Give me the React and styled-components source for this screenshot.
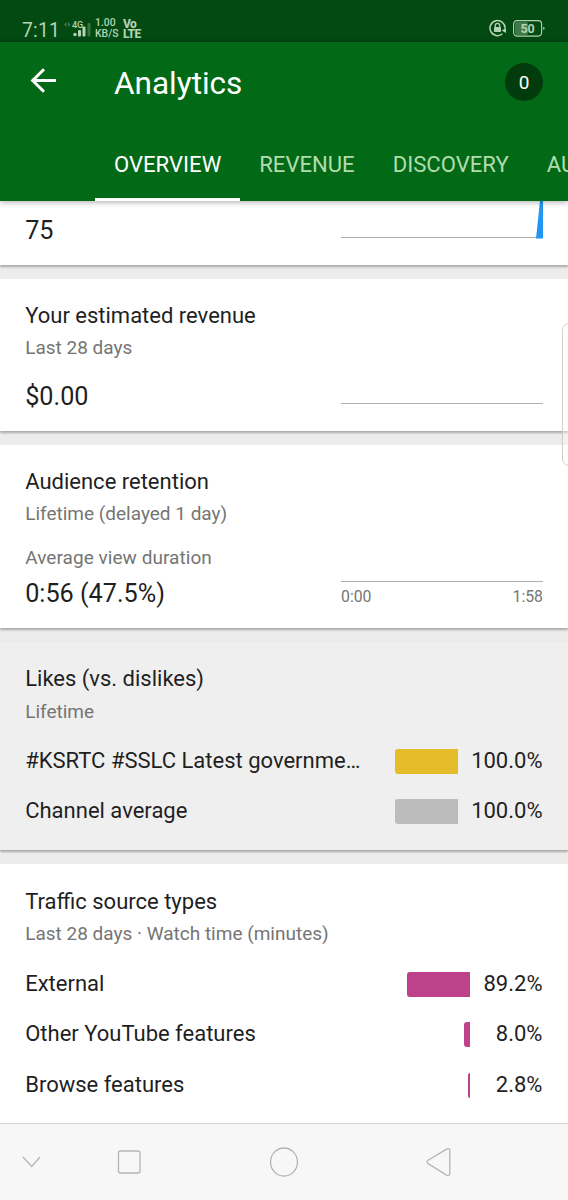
import styled, { createGlobalStyle } from "styled-components";
import React from "react";

const GlobalStyle = createGlobalStyle`
  * {
    box-sizing: border-box;
  }
  body {
    margin: 0;
    background: #ececec;
    color: #1f1f1f;
    font-family: Roboto, "Liberation Sans", sans-serif;
  }
`;

const Screen = styled.div`
  position: relative;
  display: flex;
  flex-direction: column;
  width: 568px;
  height: 1200px;
  overflow: hidden;
`;

const StatusBar = styled.div`
  display: flex;
  align-items: flex-end;
  flex: none;
  height: 42px;
  padding: 0 23px 3px 22px;
  background: #024a12;
  color: #b4d3b5;
`;
const Clock = styled.span`
  width: 41px;
  font-size: 19.3px;
  line-height: 17px;
  letter-spacing: 0.2px;
  white-space: nowrap;
`;
const StackedText = styled.div`
  display: flex;
  flex-direction: column;
  margin-left: ${(props) => props.$left}px;
  font-size: ${(props) => props.$size}px;
  font-weight: ${(props) => props.$weight};
  line-height: ${(props) => props.$line}px;
  letter-spacing: ${(props) => props.$spacing || 0}px;
  white-space: nowrap;
`;
const StatusIcons = styled.div`
  display: flex;
  align-items: center;
  gap: 7px;
  margin: 0 0 2px auto;
`;

const Header = styled.header`
  position: relative;
  z-index: 1;
  flex: none;
  height: 159px;
  background: #026a17;
  color: #fff;
  box-shadow: 0 1px 6px rgba(0, 0, 0, 0.35);
`;
const Toolbar = styled.div`
  display: flex;
  align-items: center;
  height: 79px;
  padding: 0 25px 0 30px;
`;
const Title = styled.h1`
  margin: 4px 0 0 57px;
  font-size: 31.5px;
  font-weight: 400;
  line-height: 38px;
`;
const Counter = styled.div`
  width: 38px;
  height: 38px;
  margin-left: auto;
  border-radius: 50%;
  background: #023c0d;
  font-size: 19px;
  line-height: 39px;
  text-align: center;
`;
const Tabs = styled.nav`
  display: flex;
  height: 80px;
  padding-left: 95px;
  overflow: hidden;
`;
const Tab = styled.div`
  flex: none;
  height: 80px;
  padding: 0 19px;
  border-bottom: 3px solid ${(props) => (props.$active ? "#fff" : "transparent")};
  color: ${(props) => (props.$active ? "#fff" : "#b3dcae")};
  font-size: 22.1px;
  line-height: 87px;
`;

const Card = styled.section`
  flex: none;
  height: ${(props) => props.$height}px;
  margin-bottom: ${(props) => (props.$last ? 0 : 14)}px;
  padding: ${(props) => props.$top ?? 24}px 25px 0 25.2px;
  background: ${(props) => (props.$muted ? "#efefef" : "#fff")};
  box-shadow: 0 2px 2px rgba(0, 0, 0, 0.28);
`;
const CardTitle = styled.h2`
  margin: 0;
  font-size: 22px;
  font-weight: 400;
  line-height: 26px;
`;
const Caption = styled.p`
  margin: ${(props) => props.$gap || 7}px 0 0;
  color: #757575;
  font-size: 19px;
  line-height: 24px;
`;
const MetricRow = styled.div`
  display: flex;
  justify-content: space-between;
  margin-top: ${(props) => props.$gap}px;
`;
const Value = styled.div`
  font-size: 25.2px;
  line-height: 30px;
`;
const Duration = styled.div`
  ${Caption} {
    margin: 0 0 9px;
    letter-spacing: 0.05px;
  }
`;
const ViewsChart = styled.svg`
  margin-top: -15px;
`;
const Axis = styled.div`
  width: 202px;
  height: ${(props) => props.$height}px;
  border-bottom: 1.5px solid #b0b0b0;
`;
const AxisLabels = styled.div`
  display: flex;
  justify-content: space-between;
  margin-top: 5px;
  color: #757575;
  font-size: 15.8px;
  line-height: 20px;
`;

const BarList = styled.div`
  margin-top: ${(props) => props.$gap}px;
`;
const BarRow = styled.div`
  display: flex;
  align-items: center;
  height: 50.5px;
  font-size: 22px;
  line-height: 26px;
`;
const BarLabel = styled.div`
  width: 343px;
  margin-bottom: 1px;
  overflow: hidden;
  text-overflow: ellipsis;
  white-space: nowrap;
`;
const BarTrack = styled.div`
  display: flex;
  flex: 1;
  justify-content: flex-end;
`;
const Bar = styled.div`
  height: 25px;
  border-radius: 3px 0 0 3px;
  background: ${(props) => props.$color};
`;
const Percent = styled.div`
  width: ${(props) => props.$width}px;
  margin-bottom: 1px;
  padding-right: 0.5px;
  text-align: right;
`;

const EdgePanel = styled.div`
  position: absolute;
  top: 323px;
  right: -10px;
  z-index: 2;
  width: 16px;
  height: 143px;
  border: 1px solid #cfcfcf;
  border-radius: 7px;
  background: rgba(255, 255, 255, 0.35);
`;

const NavBar = styled.footer`
  position: relative;
  z-index: 1;
  display: flex;
  align-items: center;
  flex: none;
  height: 77px;
  border-top: 1px solid #d2d2d2;
  background: #f7f7f7;
`;

const likes = [
  { label: "#KSRTC #SSLC Latest governme…", value: "100.0%", bar: 63, color: "#e5bc29" },
  { label: "Channel average", value: "100.0%", bar: 63, color: "#bcbcbc" },
];
const traffic = [
  { label: "External", value: "89.2%", bar: 63, color: "#bd4289" },
  { label: "Other YouTube features", value: "8.0%", bar: 6, color: "#bd4289" },
  { label: "Browse features", value: "2.8%", bar: 2, color: "#bd4289" },
];

function Bars({ items, percentWidth, gap }) {
  return (
    <BarList $gap={gap}>
      {items.map((item) => (
        <BarRow key={item.label}>
          <BarLabel>{item.label}</BarLabel>
          <BarTrack>
            <Bar $color={item.color} style={{ width: item.bar }} />
          </BarTrack>
          <Percent $width={percentWidth}>{item.value}</Percent>
        </BarRow>
      ))}
    </BarList>
  );
}

function SignalIcon() {
  return (
    <svg width="28" height="19" viewBox="0 0 28 19" fill="#b4d3b5">
      <path d="M3.5 2 1 4.500 3.500 7zM5 2l2.500 2.500L5 7z" opacity=".35" />
      <text x="9" y="7.700" fontSize="9" fontWeight="500">
        4G
      </text>
      <circle cx="12" cy="14.500" r="1.700" />
      <rect x="15" y="10" width="3" height="6.500" rx="1" />
      <rect x="19.500" y="6.500" width="3" height="10" rx="1" />
      <rect x="24.500" y="3" width="3" height="13.500" rx="1" opacity=".3" />
    </svg>
  );
}

function LockIcon() {
  return (
    <svg width="17" height="18" viewBox="0 0 17 18" fill="none" stroke="#b4d3b5">
      <path d="M13.400 14.800A7.500 7.500 0 1 1 16 9.500" strokeWidth="1.500" />
      <path d="M12.700 11.500 17 9v5z" fill="#b4d3b5" stroke="none" />
      <rect x="5" y="8" width="7" height="5" rx=".8" fill="#b4d3b5" stroke="none" />
      <path d="M6.300 8V6.600a2.200 2.200 0 0 1 4.400 0V8" strokeWidth="1.300" />
    </svg>
  );
}

function BatteryIcon() {
  return (
    <svg width="32" height="17" viewBox="0 0 32 17" fill="#b4d3b5">
      <rect x="2" y="2" width="13" height="13" rx="2" opacity=".35" />
      <rect x=".6" y=".6" width="28" height="15.500" rx="3.500" fill="none" stroke="#b4d3b5" strokeWidth="1.100" />
      <path d="M30.200 7q1.400 0 1.400 1.400t-1.400 1.400z" />
      <text x="14.600" y="12.800" fontSize="12.500" fontWeight="700" textAnchor="middle">
        50
      </text>
    </svg>
  );
}

function BackArrow() {
  return (
    <svg width="27" height="28" viewBox="0 0 27 28" fill="none" stroke="#fff" strokeWidth="3">
      <path d="M26 12.500H3M14 1.300 2.700 12.500 14 23.800" />
    </svg>
  );
}

function NavIcons() {
  return (
    <svg width="568" height="76" viewBox="0 1124 568 76" fill="none" stroke="#b5b5b5" strokeWidth="1.300">
      <path d="m23 1157 8.700 9.500 8.300-9.500" />
      <rect x="118.500" y="1151" width="21.500" height="22" rx="2" />
      <ellipse cx="284" cy="1162" rx="13.500" ry="14" />
      <path d="m428.100 1160.300 18.500-11.200q3.200-1.600 3.200 2v22q0 3.400-3.200 2l-18.500-11.500q-2-1.600 0-3.300z" />
    </svg>
  );
}

export default function App() {
  return (
    <Screen>
      <GlobalStyle />
      <StatusBar>
        <Clock>7:11</Clock>
        <SignalIcon />
        <StackedText $left={4} $size={10.4} $weight={500} $line={10.3}>
          <span>1.00</span>
          <span>KB/S</span>
        </StackedText>
        <StackedText $left={4.5} $size={12} $weight={800} $line={10} $spacing={-0.6}>
          <span>Vo</span>
          <span>LTE</span>
        </StackedText>
        <StatusIcons>
          <LockIcon />
          <BatteryIcon />
        </StatusIcons>
      </StatusBar>

      <Header>
        <Toolbar>
          <BackArrow />
          <Title>Analytics</Title>
          <Counter>0</Counter>
        </Toolbar>
        <Tabs>
          <Tab $active>OVERVIEW</Tab>
          <Tab>REVENUE</Tab>
          <Tab>DISCOVERY</Tab>
          <Tab>AUDIENCE</Tab>
        </Tabs>
      </Header>

      <Card $height={64} $top={0}>
        <MetricRow $gap={15}>
          <Value>75</Value>
          <ViewsChart width="202" height="38" viewBox="0 0 202 38">
            <path d="M0 36.500h202" stroke="#b0b0b0" strokeWidth="1.200" />
            <path d="M195 37.500 199 0h3v37.500z" fill="#2196f3" />
          </ViewsChart>
        </MetricRow>
      </Card>

      <Card $height={152}>
        <CardTitle>Your estimated revenue</CardTitle>
        <Caption>Last 28 days</Caption>
        <MetricRow $gap={22}>
          <Value>$0.00</Value>
          <Axis $height={22} />
        </MetricRow>
      </Card>

      <Card $height={183}>
        <CardTitle>Audience retention</CardTitle>
        <Caption>Lifetime (delayed 1 day)</Caption>
        <MetricRow $gap={20}>
          <Duration>
            <Caption>Average view duration</Caption>
            <Value>0:56 (47.5%)</Value>
          </Duration>
          <div>
            <Axis $height={36} />
            <AxisLabels>
              <span>0:00</span>
              <span>1:58</span>
            </AxisLabels>
          </div>
        </MetricRow>
      </Card>

      <Card $height={208} $muted>
        <CardTitle>Likes (vs. dislikes)</CardTitle>
        <Caption $gap={8}>Lifetime</Caption>
        <Bars items={likes} percentWidth={85.5} gap={12} />
      </Card>

      <Card $height={259} $top={25} $last>
        <CardTitle>Traffic source types</CardTitle>
        <Caption>Last 28 days · Watch time (minutes)</Caption>
        <Bars items={traffic} percentWidth={73} gap={13} />
      </Card>

      <NavBar>
        <NavIcons />
      </NavBar>
      <EdgePanel />
    </Screen>
  );
}
